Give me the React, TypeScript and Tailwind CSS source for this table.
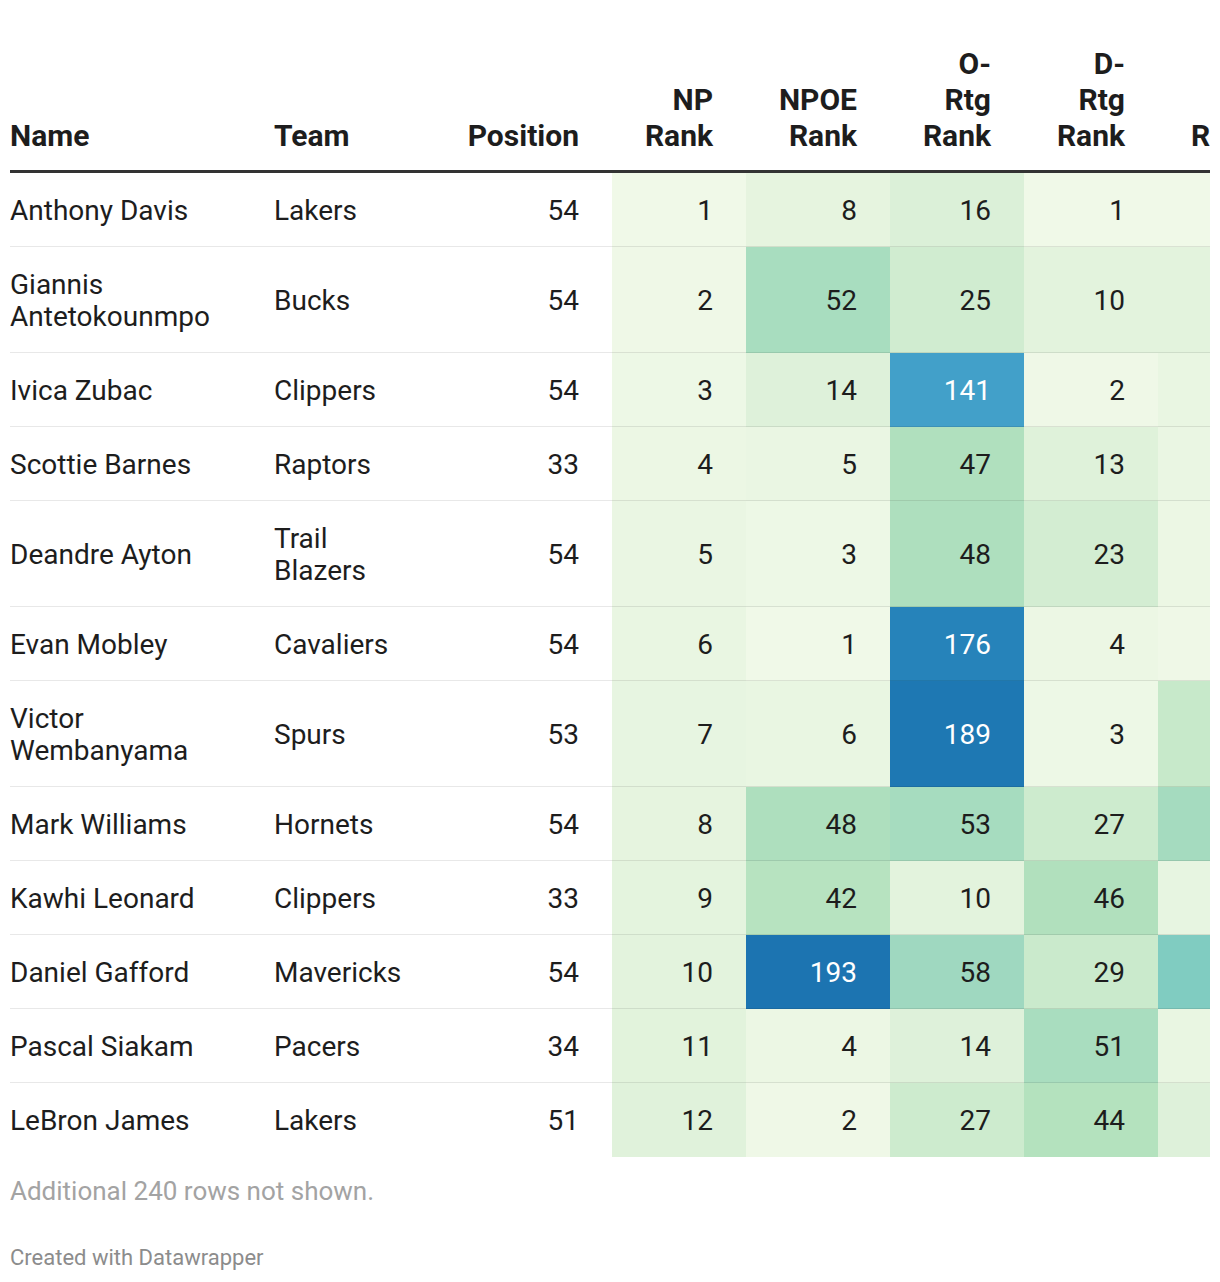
import React from "react";

type Row = {
  name: string[];
  team: string[];
  pos: number;
  np: number;
  npoe: number;
  ortg: number;
  drtg: number;
  r: number;
};

const rows: Row[] = [
  { name: ["Anthony Davis"], team: ["Lakers"], pos: 54, np: 1, npoe: 8, ortg: 16, drtg: 1, r: 1 },
  { name: ["Giannis", "Antetokounmpo"], team: ["Bucks"], pos: 54, np: 2, npoe: 52, ortg: 25, drtg: 10, r: 10 },
  { name: ["Ivica Zubac"], team: ["Clippers"], pos: 54, np: 3, npoe: 14, ortg: 141, drtg: 2, r: 6 },
  { name: ["Scottie Barnes"], team: ["Raptors"], pos: 33, np: 4, npoe: 5, ortg: 47, drtg: 13, r: 5 },
  { name: ["Deandre Ayton"], team: ["Trail", "Blazers"], pos: 54, np: 5, npoe: 3, ortg: 48, drtg: 23, r: 4 },
  { name: ["Evan Mobley"], team: ["Cavaliers"], pos: 54, np: 6, npoe: 1, ortg: 176, drtg: 4, r: 2 },
  { name: ["Victor", "Wembanyama"], team: ["Spurs"], pos: 53, np: 7, npoe: 6, ortg: 189, drtg: 3, r: 31 },
  { name: ["Mark Williams"], team: ["Hornets"], pos: 54, np: 8, npoe: 48, ortg: 53, drtg: 27, r: 54 },
  { name: ["Kawhi Leonard"], team: ["Clippers"], pos: 33, np: 9, npoe: 42, ortg: 10, drtg: 46, r: 7 },
  { name: ["Daniel Gafford"], team: ["Mavericks"], pos: 54, np: 10, npoe: 193, ortg: 58, drtg: 29, r: 74 },
  { name: ["Pascal Siakam"], team: ["Pacers"], pos: 34, np: 11, npoe: 4, ortg: 14, drtg: 51, r: 6 },
  { name: ["LeBron James"], team: ["Lakers"], pos: 51, np: 12, npoe: 2, ortg: 27, drtg: 44, r: 14 },
];

const stops: [number, string][] = [
  [1, "#f0f9e8"],
  [10, "#e3f3dd"],
  [25, "#d0ecd0"],
  [45, "#b3e1bd"],
  [53, "#a6dcbf"],
  [60, "#9cd7c1"],
  [75, "#7ecbc1"],
  [100, "#62b9c9"],
  [141, "#42a0c9"],
  [176, "#2683ba"],
  [193, "#1c74b1"],
  [252, "#08589e"],
];

function hexToRgb(h: string): [number, number, number] {
  const n = parseInt(h.slice(1), 16);
  return [(n >> 16) & 255, (n >> 8) & 255, n & 255];
}

function colorFor(v: number): string {
  if (v <= stops[0][0]) return stops[0][1];
  for (let i = 0; i < stops.length - 1; i++) {
    const [a, ca] = stops[i];
    const [b, cb] = stops[i + 1];
    if (v >= a && v <= b) {
      const t = (v - a) / (b - a);
      const x = hexToRgb(ca);
      const y = hexToRgb(cb);
      const c = x.map((k, j) => Math.round(k + (y[j] - k) * t));
      return `rgb(${c[0]}, ${c[1]}, ${c[2]})`;
    }
  }
  return stops[stops.length - 1][1];
}

const font = { fontFamily: "Roboto, 'Liberation Sans', sans-serif" };

function Lines({ lines }: { lines: string[] }) {
  return (
    <>
      {lines.map((l, i) => (
        <div key={i} className="whitespace-nowrap">
          {l}
        </div>
      ))}
    </>
  );
}

export default function App() {
  const gridCols = "grid grid-cols-[264px_160px_178px_134px_144px_134px_134px_134px] w-[1282px]";
  return (
    <div className="bg-white min-h-[1282px] px-[10px] pt-[46px] text-[#1d1d1d]" style={font}>
      <div className="w-[1200px] overflow-hidden">
        {/* Header */}
        <div className={`${gridCols} items-end border-b-[3px] border-[#333333] text-[30px] leading-[36px] font-bold`}>
          <div className="pb-[16px]">Name</div>
          <div className="pb-[16px]">Team</div>
          <div className="pb-[16px] pr-[33px] text-right">Position</div>
          <div className="pb-[16px] pr-[33px] text-right">
            <Lines lines={["NP", "Rank"]} />
          </div>
          <div className="pb-[16px] pr-[33px] text-right">
            <Lines lines={["NPOE", "Rank"]} />
          </div>
          <div className="pb-[16px] pr-[33px] text-right">
            <Lines lines={["O-", "Rtg", "Rank"]} />
          </div>
          <div className="pb-[16px] pr-[33px] text-right">
            <Lines lines={["D-", "Rtg", "Rank"]} />
          </div>
          <div className="pb-[16px] pr-[33px] text-right">
            <Lines lines={["Rank"]} />
          </div>
        </div>

        {/* Body */}
        <div className="text-[28px] leading-[32px]">
          {rows.map((r, i) => {
            const last = i === rows.length - 1;
            const cell = last
              ? "pt-[22px] pb-[20px] flex flex-col justify-center"
              : "pt-[22px] pb-[19px] border-b border-black/[0.09] flex flex-col justify-center";
            const heat = (v: number, show = true) => (
              <div
                className={`${cell} items-end pr-[33px]`}
                style={{ backgroundColor: colorFor(v), color: v >= 120 ? "#ffffff" : "#1d1d1d" }}
              >
                {show ? v : ""}
              </div>
            );
            return (
              <div key={i} className={gridCols}>
                <div className={cell}>
                  <Lines lines={r.name} />
                </div>
                <div className={cell}>
                  <Lines lines={r.team} />
                </div>
                <div className={`${cell} items-end pr-[33px]`}>{r.pos}</div>
                {heat(r.np)}
                {heat(r.npoe)}
                {heat(r.ortg)}
                {heat(r.drtg)}
                {heat(r.r, false)}
              </div>
            );
          })}
        </div>
      </div>

      <div className="mt-[18px] text-[26px] leading-[32px] text-[#a3a3a3]">Additional 240 rows not shown.</div>
      <div className="mt-[37px] text-[22px] leading-[28px] text-[#8c8c8c]">Created with Datawrapper</div>
    </div>
  );
}
